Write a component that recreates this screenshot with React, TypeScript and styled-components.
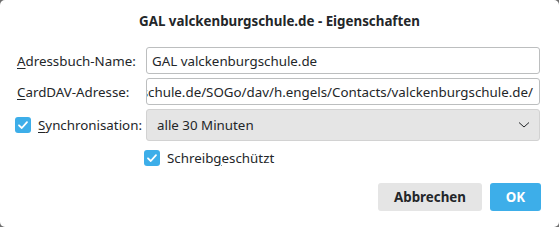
import React from "react";
import styled, { createGlobalStyle } from "styled-components";

const Global = createGlobalStyle`
  html, body { margin: 0; padding: 0; background: #6e6e6e; }
  body { width: 559px; height: 227px; overflow: hidden; font-family: "Noto Sans", "Open Sans", sans-serif; }
  * { box-sizing: border-box; }
`;

const Dialog = styled.div`
  width: 559px;
  height: 227px;
  background: #ffffff;
  border-radius: 5px;
  color: #232629;
  font-size: 13.33px;
  display: flex;
  flex-direction: column;
`;

const Title = styled.div`
  height: 43px;
  display: flex;
  align-items: center;
  justify-content: center;
  font-weight: 700;
  font-size: 13.33px;
  padding-bottom: 1px;
`;

const Form = styled.div`
  display: grid;
  grid-template-columns: 125px 1fr;
  column-gap: 6px;
  row-gap: 4px;
  padding: 4px 19px 0 15px;
  align-items: center;
`;

const Label = styled.label<{ $indent?: boolean }>`
  display: flex;
  align-items: center;
  gap: 7px;
  padding-left: ${(p) => (p.$indent ? "2px" : "0")};
  white-space: nowrap;
`;

const U = styled.span`
  text-decoration: underline;
  text-underline-offset: 2px;
`;

const Field = styled.div<{ $end?: boolean }>`
  height: 27px;
  border: 1px solid #bcbebf;
  border-radius: 3px;
  padding: ${(p) => (p.$end ? "0 6px 0 0" : "0 5px")};
  background: #fff;
  display: flex;
  align-items: center;
  justify-content: ${(p) => (p.$end ? "flex-end" : "flex-start")};
  overflow: hidden;
  white-space: nowrap;
`;

const FieldText = styled.span`
  flex: none;
`;

const Combo = styled.div`
  height: 32px;
  border: 1px solid #d2d2d2;
  border-radius: 3px;
  background: #e5e5e5;
  display: flex;
  align-items: center;
  justify-content: space-between;
  padding: 0 9px 0 10px;
`;

const Box = styled.span`
  width: 16px;
  height: 16px;
  border-radius: 3px;
  background: #3daee9;
  display: inline-flex;
  align-items: center;
  justify-content: center;
  flex: none;
`;

const CheckRow = styled.div`
  display: flex;
  align-items: center;
  gap: 7px;
  margin-top: 4px;
  margin-left: -2px;
`;

const Spacer = styled.div``;

const Buttons = styled.div`
  display: flex;
  justify-content: flex-end;
  gap: 8px;
  padding: 0 18px 0 0;
  margin-top: 16px;
`;

const Button = styled.button<{ $primary?: boolean }>`
  height: 28px;
  border: none;
  border-radius: 3px;
  font: inherit;
  font-weight: 700;
  padding: 0;
  width: ${(p) => (p.$primary ? "51px" : "104px")};
  background: ${(p) => (p.$primary ? "#3daee9" : "#e5e5e5")};
  color: ${(p) => (p.$primary ? "#ffffff" : "#232629")};
`;

const Check = () => (
  <Box>
    <svg width="12" height="12" viewBox="0 0 12 12">
      <path d="M2 6.3 L4.8 9 L10 3.2" fill="none" stroke="#fff" strokeWidth="1.8" strokeLinecap="round" strokeLinejoin="round" />
    </svg>
  </Box>
);

const Chevron = () => (
  <svg width="12" height="8" viewBox="0 0 12 8">
    <path d="M1 1.5 L6 6 L11 1.5" fill="none" stroke="#232629" strokeWidth="1" />
  </svg>
);

export default function App() {
  return (
    <>
      <Global />
      <Dialog>
        <Title>GAL valckenburgschule.de - Eigenschaften</Title>
        <Form>
          <Label $indent>
            <span>
              <U>A</U>dressbuch-Name:
            </span>
          </Label>
          <Field>
            <FieldText>GAL valckenburgschule.de</FieldText>
          </Field>
          <Label $indent>
            <span>
              <U>C</U>ardDAV-Adresse:
            </span>
          </Label>
          <Field $end>
            <FieldText>schule.de/SOGo/dav/h.engels/Contacts/valckenburgschule.de/</FieldText>
          </Field>
          <Label>
            <Check />
            <span>
              <U>S</U>ynchronisation:
            </span>
          </Label>
          <Combo>
            <span>alle 30 Minuten</span>
            <Chevron />
          </Combo>
          <Spacer />
          <CheckRow>
            <Check />
            <span>
              Schreib<U>g</U>eschützt
            </span>
          </CheckRow>
        </Form>
        <Buttons>
          <Button>Abbrechen</Button>
          <Button $primary>OK</Button>
        </Buttons>
      </Dialog>
    </>
  );
}
